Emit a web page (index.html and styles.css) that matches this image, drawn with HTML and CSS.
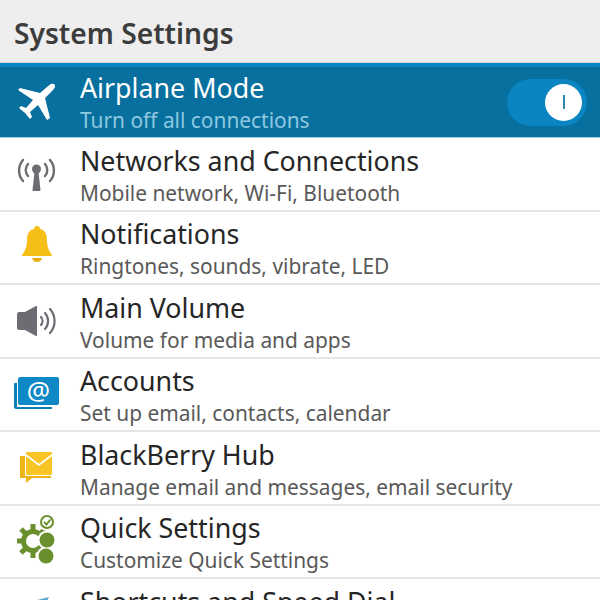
FILE: index.html
```html
<!DOCTYPE html>
<html lang="en">
<head>
    <meta charset="UTF-8">
    <title>System Settings</title>
    <link rel="stylesheet" href="styles.css">
</head>
<body>
    <header class="title-bar">System Settings</header>
    <div class="settings-list">
        <div class="row row-active">
            <div class="row-icon"><svg width="44" height="44" viewBox="0 0 44 44"><path fill="#fff" d="M40 4c-2-1-4 0-7 3l-7 6L6 8 4 10l15 10-7 8-5-2-2 2 6 5 5 6 2-2-2-5 8-7 9 15 3-2-5-20 7-7c3-3 4-5 2-7z"/></svg></div>
            <div class="row-text"><div class="row-title">Airplane Mode</div><div class="row-sub">Turn off all connections</div></div>
            <div class="toggle"><div class="toggle-knob"><div class="toggle-mark"></div></div></div>
        </div>
        <div class="row">
            <div class="row-icon"><svg width="44" height="44" viewBox="0 0 44 44"><g fill="none" stroke="#6b6d72" stroke-width="2.400" stroke-linecap="round"><path d="M14 12a9 9 0 0 0 0 12"/><path d="M9 8a16 16 0 0 0 0 21"/><path d="M31 12a9 9 0 0 1 0 12"/><path d="M36 8a16 16 0 0 1 0 21"/></g><circle cx="22.500" cy="17" r="4.500" fill="#6b6d72"/><path fill="#6b6d72" d="M20.500 20h4l2 18a1 1 0 0 1-1 1h-6a1 1 0 0 1-1-1z"/></svg></div>
            <div class="row-text"><div class="row-title">Networks and Connections</div><div class="row-sub">Mobile network, Wi-Fi, Bluetooth</div></div>
        </div>
        <div class="row">
            <div class="row-icon"><svg width="44" height="44" viewBox="0 0 44 44"><path fill="#f6bf17" d="M23 1c2 0 3 1 3 3 5 1 7 5 7 11 0 7 2 11 5 15v1H8v-1c3-4 5-8 5-15 0-6 2-10 7-11 0-2 1-3 3-3z"/><path fill="#e9ad10" d="M18 33h10c-1 3-3 4-5 4s-4-1-5-4z"/></svg></div>
            <div class="row-text"><div class="row-title">Notifications</div><div class="row-sub">Ringtones, sounds, vibrate, LED</div></div>
        </div>
        <div class="row">
            <div class="row-icon"><svg width="44" height="44" viewBox="0 0 44 44"><path fill="#6b6d72" d="M3 15c0-1 1-2 2-2h6L22 7c1 0 1 0 1 1v28c0 1 0 1-1 1L11 31H5c-1 0-2-1-2-2z"/><g fill="none" stroke="#6b6d72" stroke-width="2.200" stroke-linecap="round"><path d="M27 18a6 6 0 0 1 0 8"/><path d="M31 14a12 12 0 0 1 0 16"/><path d="M36 10a18 18 0 0 1 0 24"/></g></svg></div>
            <div class="row-text"><div class="row-title">Main Volume</div><div class="row-sub">Volume for media and apps</div></div>
        </div>
        <div class="row">
            <div class="row-icon"><svg width="46" height="44" viewBox="0 0 46 44"><path fill="#0d7fb8" d="M1 11h2v23c0 1 0 1 1 1h34v2H2c-1 0-2-1-2-2V12c0-1 0-1 1-1z"/><rect x="4" y="5" width="41" height="28" rx="2" fill="#0f88c6"/><text x="24.500" y="28" class="at-sign">@</text></svg></div>
            <div class="row-text"><div class="row-title">Accounts</div><div class="row-sub">Set up email, contacts, calendar</div></div>
        </div>
        <div class="row">
            <div class="row-icon"><svg width="44" height="44" viewBox="0 0 44 44"><path fill="#eeb315" d="M7 10h30v22H18l-6 5v-5H7c-1 0-1 0-1-1V11c0-1 0-1 1-1z"/><rect x="11" y="5" width="27" height="25" rx="1" fill="#fff"/><rect x="12" y="6" width="26" height="23" rx="1" fill="#f8c524"/><path fill="none" stroke="#fff" stroke-width="1.600" d="M12 9l13 10 13-10"/></svg></div>
            <div class="row-text"><div class="row-title">BlackBerry Hub</div><div class="row-sub">Manage email and messages, email security</div></div>
        </div>
        <div class="row">
            <div class="row-icon"><svg class="icon-overflow" width="44" height="44" viewBox="0 0 44 44"><circle cx="19" cy="22" r="12" fill="#6a8f2c"/><g stroke="#6a8f2c" stroke-width="5"><path d="M19 5v34M3 22h32M7 10l24 24M31 10L7 34"/></g><circle cx="19" cy="22" r="7" fill="#fff"/><circle cx="33" cy="3" r="9" fill="#fff"/><circle cx="33" cy="21" r="9.500" fill="#fff"/><circle cx="32" cy="37" r="9.500" fill="#fff"/><circle cx="33" cy="3" r="6" fill="none" stroke="#6a8f2c" stroke-width="2"/><path fill="none" stroke="#6a8f2c" stroke-width="2" d="M30 3l2.500 2.500 4-5"/><circle cx="33" cy="21" r="7.500" fill="#6a8f2c"/><circle cx="32" cy="37" r="7.500" fill="#6a8f2c"/></svg></div>
            <div class="row-text"><div class="row-title">Quick Settings</div><div class="row-sub">Customize Quick Settings</div></div>
        </div>
        <div class="row">
            <div class="row-icon"><svg width="44" height="44" viewBox="0 0 44 44"><path fill="#5ba6d0" d="M23 7l12-3-3 6z"/></svg></div>
            <div class="row-text"><div class="row-title">Shortcuts and Speed Dial</div><div class="row-sub"></div></div>
        </div>
    </div>
</body>
</html>
```

FILE: styles.css
```css
* {
    margin: 0;
    padding: 0;
    box-sizing: border-box;
}
html, body {
    width: 600px;
    height: 600px;
    overflow: hidden;
}
body {
    font-family: 'Noto Sans', sans-serif;
    background-color: #fff;
    color: #262626;
}
.title-bar {
    height: 63px;
    padding-left: 14px;
    line-height: 67px;
    font-size: 28.200px;
    font-weight: 600;
    color: #3c3c3c;
    background-color: #eeeeee;
    border-bottom: 1px solid #d8d8d8;
}
.row {
    display: flex;
    align-items: center;
    height: 73.500px;
    border-bottom: 2px solid #e6e6e6;
}
.row-active {
    height: 75px;
    background-color: #07709e;
    border-top: 4px solid #0a85c2;
    border-bottom: 1px solid #a9cfe2;
}
.row-icon {
    width: 80px;
    padding-left: 14px;
    flex-shrink: 0;
    display: flex;
}
.icon-overflow {
    overflow: visible;
}
.row-text {
    flex: 1;
    padding-top: 2px;
}
.row-active .row-text {
    padding-top: 0;
}
.row-title {
    font-size: 26.800px;
    line-height: 36px;
}
.row-sub {
    font-size: 20.900px;
    line-height: 28px;
    min-height: 28px;
    color: #595959;
}
.row-active .row-title {
    color: #fff;
}
.row-active .row-sub {
    color: #8fc8e0;
}
.at-sign {
    font-family: 'Noto Sans', sans-serif;
    font-size: 26px;
    fill: #fff;
    text-anchor: middle;
}
.toggle {
    width: 80px;
    height: 47px;
    margin-right: 13px;
    border-radius: 24px;
    background-color: #0a85c2;
    display: flex;
    justify-content: flex-end;
    align-items: center;
    padding-right: 5px;
}
.toggle-knob {
    width: 37px;
    height: 37px;
    border-radius: 50%;
    background-color: #fff;
    display: flex;
    justify-content: center;
    align-items: center;
}
.toggle-mark {
    width: 2px;
    height: 14px;
    background-color: #2f86ad;
}
```
